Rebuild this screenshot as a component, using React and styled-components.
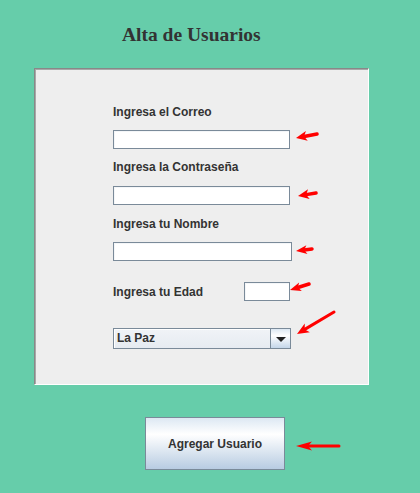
import React from 'react';
import styled, { createGlobalStyle } from 'styled-components';

const GREEN = '#66cdaa';
const PANEL = '#eeeeee';
const TEXT = '#333333';
const EDGE = '#7a8a99';
const RED = '#ff0000';

const GlobalStyle = createGlobalStyle`
  html, body {
    margin: 0;
    padding: 0;
    background: ${GREEN};
  }
  body {
    font-family: "Liberation Sans", Arial, sans-serif;
  }
`;

const Page = styled.div`
  width: 420px;
  height: 493px;
  padding-top: 23px;
  box-sizing: border-box;
  background: ${GREEN};
  display: flex;
  flex-direction: column;
`;

const Title = styled.h1`
  margin: 0 0 21px 122px;
  font-family: "Liberation Serif", "Times New Roman", serif;
  font-weight: bold;
  font-size: 19.5px;
  line-height: 24px;
  color: ${TEXT};
`;

const Panel = styled.div`
  margin-left: 34px;
  width: 335px;
  height: 317px;
  box-sizing: border-box;
  background: ${PANEL};
  border-top: 1px solid #888888;
  border-left: 1px solid #888888;
  border-right: 1px solid #ffffff;
  border-bottom: 1px solid #ffffff;
  box-shadow: inset 1px 1px 0 #a8a8a8;
  padding: 36px 0 0 78px;
  display: flex;
  flex-direction: column;
  align-items: flex-start;
`;

const Label = styled.div`
  font-weight: bold;
  font-size: 12px;
  line-height: 15px;
  color: ${TEXT};
  margin-top: ${p => p.$top || 0}px;
  width: ${p => (p.$width ? `${p.$width}px` : 'auto')};
`;

const Row = styled.div`
  display: flex;
  align-items: flex-start;
  margin-top: ${p => p.$top || 0}px;
  margin-left: ${p => p.$left || 0}px;
`;

const Field = styled.div`
  width: ${p => p.$width}px;
  height: 19px;
  box-sizing: border-box;
  background: #ffffff;
  border: 1px solid ${EDGE};
  box-shadow: inset 1px 1px 0 #f4f6f8;
`;

const Combo = styled.div`
  width: 178px;
  height: 21px;
  box-sizing: border-box;
  border: 1px solid ${EDGE};
  display: flex;
  background: linear-gradient(#f0f3f7, #e6ebf1);
`;

const ComboText = styled.div`
  flex: 1;
  padding-left: 3px;
  font-weight: bold;
  font-size: 12px;
  line-height: 19px;
  color: ${TEXT};
  box-shadow: inset 1px 1px 0 #ffffff;
`;

const ComboButton = styled.div`
  width: 19px;
  border-left: 1px solid ${EDGE};
  display: flex;
  align-items: center;
  justify-content: center;
  background: linear-gradient(#dde8f3 0%, #ffffff 35%, #c4d6e9 100%);
`;

const DownTriangle = styled.div`
  width: 0;
  height: 0;
  border-left: 5px solid transparent;
  border-right: 5px solid transparent;
  border-top: 5px solid #222222;
  margin-top: 1px;
`;

const Button = styled.div`
  width: 140px;
  height: 53px;
  box-sizing: border-box;
  border: 1px solid ${EDGE};
  display: flex;
  align-items: center;
  justify-content: center;
  font-weight: bold;
  font-size: 12px;
  color: ${TEXT};
  background: linear-gradient(#dde8f3 0%, #ffffff 32%, #b8cce2 100%);
`;

const ArrowBox = styled.svg`
  flex: none;
  display: block;
  margin-left: ${p => p.$left || 0}px;
  margin-top: ${p => p.$top || 0}px;
`;

// red annotation arrow, drawn from tail (tx,ty) to tip (hx,hy)
const Arrow = ({ w, h, tail, tip, head = 10, half = 4.5, stroke = 3, left, top }) => {
  const [tx, ty] = tail;
  const [hx, hy] = tip;
  const dx = hx - tx;
  const dy = hy - ty;
  const len = Math.hypot(dx, dy);
  const ux = dx / len;
  const uy = dy / len;
  const nx = -uy;
  const ny = ux;
  const bx = hx - ux * head;
  const by = hy - uy * head;
  const kx = hx - ux * head * 0.75;
  const ky = hy - uy * head * 0.75;
  const pts = [
    [hx, hy],
    [bx + nx * half, by + ny * half],
    [kx, ky],
    [bx - nx * half, by - ny * half],
  ].map(p => p.join(',')).join(' ');
  return (
    <ArrowBox width={w} height={h} viewBox={`0 0 ${w} ${h}`} $left={left} $top={top}>
      <line x1={tx} y1={ty} x2={kx} y2={ky} stroke={RED} strokeWidth={stroke} strokeLinecap="round" />
      <polygon points={pts} fill={RED} />
    </ArrowBox>
  );
};

const App = () => (
  <>
    <GlobalStyle />
    <Page>
      <Title>Alta de Usuarios</Title>
      <Panel>
        <Label>Ingresa el Correo</Label>
        <Row $top={10}>
          <Field $width={177} />
          <Arrow w={24} h={12} tail={[22, 4]} tip={[1, 8]} head={11} half={5} stroke={3.5} left={5} />
        </Row>

        <Label $top={11}>Ingresa la Contraseña</Label>
        <Row $top={11}>
          <Field $width={177} />
          <Arrow w={21} h={12} tail={[19, 5]} tip={[1, 8]} head={11} half={5} stroke={3.5} left={7} top={2} />
        </Row>

        <Label $top={12}>Ingresa tu Nombre</Label>
        <Row $top={10}>
          <Field $width={179} />
          <Arrow w={19} h={12} tail={[17, 5]} tip={[1, 7]} head={11} half={4.5} stroke={3.5} left={3} top={2} />
        </Row>

        <Row $top={21}>
          <Label $top={3} $width={131}>Ingresa tu Edad</Label>
          <Field $width={46} />
          <Arrow w={21} h={14} tail={[19, 4]} tip={[0, 10]} head={11} half={4.5} stroke={3.5} top={-2} />
        </Row>

        <Row $top={27}>
          <Combo>
            <ComboText>La Paz</ComboText>
            <ComboButton>
              <DownTriangle />
            </ComboButton>
          </Combo>
          <Arrow w={42} h={30} tail={[39, 4]} tip={[2, 26]} head={12} half={5} left={4} top={-20} />
        </Row>
      </Panel>

      <Row $top={32} $left={145}>
        <Button>Agregar Usuario</Button>
        <Arrow w={48} h={12} tail={[45, 6]} tip={[2, 6]} head={16} half={4.5} left={9} top={23} />
      </Row>
    </Page>
  </>
);

export default App;
